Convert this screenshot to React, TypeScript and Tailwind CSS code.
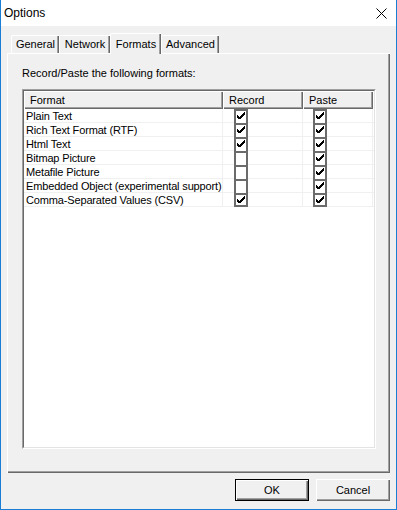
import React from "react";

const rows: [string, boolean, boolean][] = [
  ["Plain Text", true, true],
  ["Rich Text Format (RTF)", true, true],
  ["Html Text", true, true],
  ["Bitmap Picture", false, true],
  ["Metafile Picture", false, true],
  ["Embedded Object (experimental support)", false, true],
  ["Comma-Separated Values (CSV)", true, true],
];

function Check({ checked, last }: { checked: boolean; last: boolean }) {
  return (
    <div
      className={
        "w-[14px] h-[14px] bg-white border-x-2 border-t-2 border-[#6b6b6b] relative " +
        (last ? "border-b-2" : "")
      }
    >
      {checked && (
        <svg
          width="8"
          height="7"
          viewBox="0 0 8 7"
          className="absolute left-[1px] top-[1px]"
          shapeRendering="crispEdges"
        >
          <polygon points="0,3 2.5,5 7.5,0 7.5,2.5 2.5,7.5 0,5.5" fill="#000" />
        </svg>
      )}
    </div>
  );
}

const bevel =
  "shadow-[inset_1px_1px_#ffffff,inset_-1px_-1px_#696969,inset_-2px_-2px_#a0a0a0]";

export default function App() {
  const tabs = [
    { label: "General", w: "w-[48px]" },
    { label: "Network", w: "w-[51px]" },
    { label: "Formats", w: "w-[51px]", sel: true },
    { label: "Advanced", w: "w-[58px]" },
  ];
  return (
    <div className="w-[397px] h-[510px] bg-[#f0f0f0] border-l border-r border-b border-[#1a7fd4] flex flex-col font-['Liberation_Sans',Arial,sans-serif] text-black overflow-hidden">
      <div className="h-[26px] bg-white flex items-center justify-between pl-[3px] pr-[9px] text-[12px] shrink-0">
        <span>Options</span>
        <svg width="11" height="11" viewBox="0 0 11 11">
          <path d="M0.5 0.5 L10.5 10.5 M10.5 0.5 L0.5 10.5" stroke="#000" strokeWidth="1" />
        </svg>
      </div>
      <div className="flex-1 px-[6px] pt-[7px] flex flex-col">
        <div className="h-[20px] flex items-end pl-[4px] text-[11px]">
          {tabs.map((t) =>
            t.sel ? (
              <div
                key={t.label}
                className={`${t.w} h-[21px] -mb-px relative z-10 bg-[#f0f0f0] border-l border-t border-white shadow-[inset_-1px_0_#696969,inset_-2px_0_#a0a0a0] flex items-start justify-center pt-[2px] rounded-tl-[2px]`}
              >
                {t.label}
              </div>
            ) : (
              <div
                key={t.label}
                className={`${t.w} h-[18px] bg-[#f0f0f0] border-l border-t border-white shadow-[inset_-1px_0_#696969,inset_-2px_0_#a0a0a0] flex items-center justify-center rounded-tl-[2px]`}
              >
                {t.label}
              </div>
            )
          )}
        </div>
        <div className="w-[383px] h-[420px] border-l border-t border-white shadow-[inset_-1px_-1px_#696969,inset_-2px_-2px_#a0a0a0] pl-[14px] pt-[13px] text-[11px]">
          <div className="h-[13px] leading-[13px]">Record/Paste the following formats:</div>
          <div className="mt-[9px] w-[354px] h-[360px] border border-t-[#a0a0a0] border-l-[#a0a0a0] border-r-white border-b-white">
            <div className="w-full h-full bg-white border border-t-[#696969] border-l-[#696969] border-r-[#e3e3e3] border-b-[#e3e3e3]">
              <div className="flex h-[18px]">
                <div className={`w-[199px] h-full bg-[#f0f0f0] ${bevel} pl-[6px] flex items-center`}>Format</div>
                <div className={`w-[80px] h-full bg-[#f0f0f0] ${bevel} pl-[6px] flex items-center`}>Record</div>
                <div className={`w-[70px] h-full bg-[#f0f0f0] ${bevel} pl-[6px] flex items-center`}>Paste</div>
              </div>
              {rows.map(([name, rec, paste], i) => (
                <div key={name} className="flex h-[14px] shadow-[inset_0_-1px_#f0f0f0]">
                  <div className="w-[199px] h-full pl-[2px] flex items-center border-r border-[#f0f0f0] leading-none whitespace-nowrap overflow-hidden tracking-[-0.15px]">
                    {name}
                  </div>
                  <div className="w-[80px] h-full pl-[11px] border-r border-[#f0f0f0]">
                    <Check checked={rec} last={i === rows.length - 1} />
                  </div>
                  <div className="w-[70px] h-full pl-[10px] border-r border-[#f0f0f0]">
                    <Check checked={paste} last={i === rows.length - 1} />
                  </div>
                </div>
              ))}
            </div>
          </div>
        </div>
        <div className="flex justify-end gap-[7px] mt-[6px] text-[11px]">
          <button className="w-[74px] h-[22px] bg-[#f0f0f0] border border-black shadow-[inset_1px_1px_#ffffff,inset_-1px_-1px_#696969,inset_-2px_-2px_#a0a0a0] flex items-center justify-center">
            OK
          </button>
          <button className="w-[74px] h-[22px] bg-[#f0f0f0] shadow-[inset_1px_1px_#ffffff,inset_-1px_-1px_#696969,inset_-2px_-2px_#a0a0a0] flex items-center justify-center">
            Cancel
          </button>
        </div>
      </div>
    </div>
  );
}
